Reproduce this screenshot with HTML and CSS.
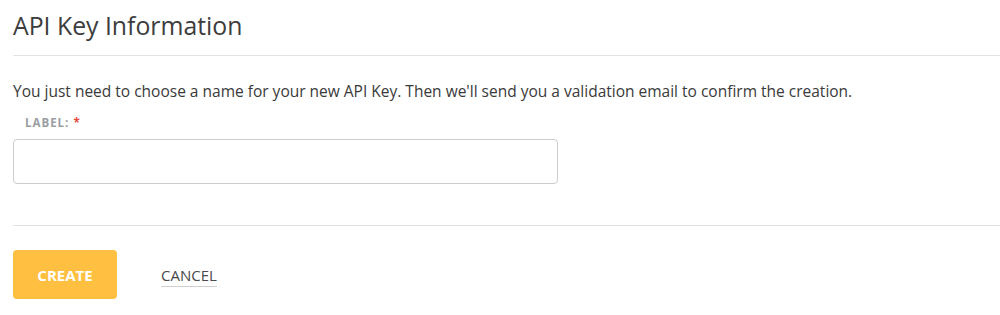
FILE: index.html
```html
<!DOCTYPE html>
<html>
<head>
<meta charset="utf-8">
<link rel="stylesheet" href="styles.css">
</head>
<body>
<div class="panel">
  <h1 class="title">API Key Information</h1>
  <div class="section">
    <p class="intro">You just need to choose a name for your new API Key. Then we'll send you a validation email to confirm the creation.</p>
    <label class="field-label">LABEL: <span class="req">*</span></label>
    <input class="field-input" type="text">
  </div>
  <div class="actions">
    <button class="btn-create">CREATE</button>
    <a class="btn-cancel" href="#">CANCEL</a>
  </div>
</div>
</body>
</html>
```
FILE: styles.css
```css
html, body {
  margin: 0;
  padding: 0;
  background: #fff;
}
body {
  font-family: "Open Sans", "Noto Sans", sans-serif;
  color: #3a3a3a;
}
.panel {
  padding-left: 13px;
}
.title {
  margin: 0;
  padding-top: 9px;
  box-sizing: border-box;
  height: 56px;
  font-size: 24.8px;
  font-weight: 400;
  line-height: 32px;
  color: #3d3d3d;
  border-bottom: 1px solid #e2e2e2;
}
.section {
  border-bottom: 1px solid #e2e2e2;
  height: 170px;
  box-sizing: border-box;
  padding-top: 25px;
}
.intro {
  margin: 0;
  font-size: 15.5px;
  line-height: 20px;
  color: #3a3a3a;
}
.field-label {
  display: block;
  margin-top: 15px;
  padding-left: 12px;
  font-size: 11.5px;
  font-weight: 700;
  letter-spacing: 1px;
  color: #9a9ea3;
  line-height: 14px;
}
.req {
  color: #e8453c;
}
.field-input {
  display: block;
  margin-top: 9px;
  width: 545px;
  height: 45px;
  box-sizing: border-box;
  border: 1px solid #cdcdcd;
  border-radius: 4px;
  outline: none;
}
.actions {
  display: flex;
  align-items: center;
  padding-top: 24px;
  gap: 44px;
}
.btn-create {
  width: 104px;
  height: 49px;
  border: none;
  border-radius: 4px;
  background: #ffbf40;
  color: #fff;
  font-family: inherit;
  font-weight: 700;
  font-size: 15px;
  cursor: pointer;
}
.btn-cancel {
  font-size: 15px;
  color: #4a4a4a;
  text-decoration: none;
  border-bottom: 1px solid #cfcfcf;
  padding-bottom: 1px;
  margin-top: 2px;
}
```
